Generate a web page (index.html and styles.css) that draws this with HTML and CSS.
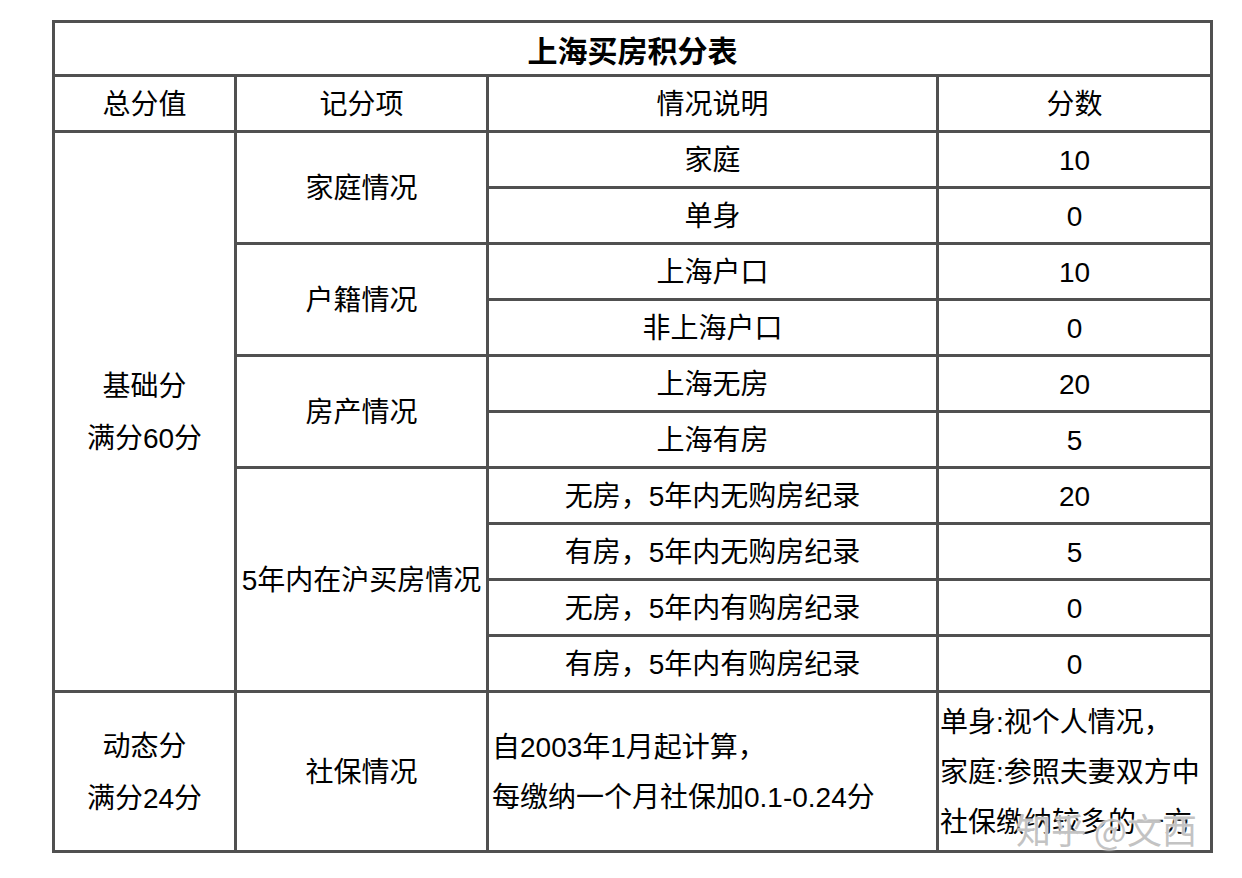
FILE: index.html
```html
<!DOCTYPE html>
<html lang="zh-CN">
<head>
<meta charset="utf-8">
<title>上海买房积分表</title>
<link rel="stylesheet" href="styles.css">
</head>
<body>
<div class="page">
  <table class="score">
    <colgroup>
      <col class="c1"><col class="c2"><col class="c3"><col class="c4">
    </colgroup>
    <tr class="r-title"><th colspan="4">上海买房积分表</th></tr>
    <tr class="r"><td>总分值</td><td>记分项</td><td>情况说明</td><td>分数</td></tr>
    <tr class="r"><td rowspan="10" class="multi">基础分<br>满分60分</td><td rowspan="2">家庭情况</td><td>家庭</td><td>10</td></tr>
    <tr class="r"><td>单身</td><td>0</td></tr>
    <tr class="r"><td rowspan="2">户籍情况</td><td>上海户口</td><td>10</td></tr>
    <tr class="r"><td>非上海户口</td><td>0</td></tr>
    <tr class="r"><td rowspan="2">房产情况</td><td>上海无房</td><td>20</td></tr>
    <tr class="r"><td>上海有房</td><td>5</td></tr>
    <tr class="r"><td rowspan="4">5年内在沪买房情况</td><td>无房，5年内无购房纪录</td><td>20</td></tr>
    <tr class="r"><td>有房，5年内无购房纪录</td><td>5</td></tr>
    <tr class="r"><td>无房，5年内有购房纪录</td><td>0</td></tr>
    <tr class="r"><td>有房，5年内有购房纪录</td><td>0</td></tr>
    <tr class="r-last">
      <td class="multi">动态分<br>满分24分</td>
      <td>社保情况</td>
      <td class="left">自2003年1月起计算，<br>每缴纳一个月社保加0.1-0.24分</td>
      <td class="left tight">单身:视个人情况，<br>家庭:参照夫妻双方中<br>社保缴纳较多的一方</td>
    </tr>
  </table>
  <div class="watermark">知乎 @文西</div>
</div>
</body>
</html>
```
FILE: styles.css
```css
html, body {
  margin: 0;
  padding: 0;
  background: #ffffff;
}

.page {
  position: relative;
  padding: 20px 0 0 52px;
  font-family: "Liberation Sans", "Noto Sans CJK SC", sans-serif;
  color: #000;
}

.score {
  border-collapse: collapse;
  table-layout: fixed;
  width: 1161px;
  border: 3px solid #505050;
}

.c1 { width: 182px; }
.c2 { width: 252px; }
.c3 { width: 450px; }
.c4 { width: 274px; }

.score th,
.score td {
  border: 3px solid #505050;
  padding: 3px 0 0 0;
  text-align: center;
  vertical-align: middle;
  font-size: 28px;
  line-height: 36px;
  font-weight: normal;
  white-space: nowrap;
}

.score th {
  font-family: "Noto Sans CJK SC", sans-serif;
  font-weight: bold;
  font-size: 30px;
  padding-top: 0;
}

.r-title { height: 54px; }
.r { height: 56px; }
.r-last { height: 160px; }

.score td.multi { line-height: 52px; }
.score td.left {
  text-align: left;
  padding-left: 3px;
  line-height: 50px;
}
.score td.tight { padding-left: 1px; }

.watermark {
  position: absolute;
  left: 1016px;
  top: 804px;
  font-family: "Noto Sans CJK SC", sans-serif;
  font-size: 35px;
  line-height: 50px;
  color: rgba(185, 185, 185, 0.85);
  text-shadow: 0 0 2px #fff, 0 0 2px #fff;
  white-space: nowrap;
}
```
